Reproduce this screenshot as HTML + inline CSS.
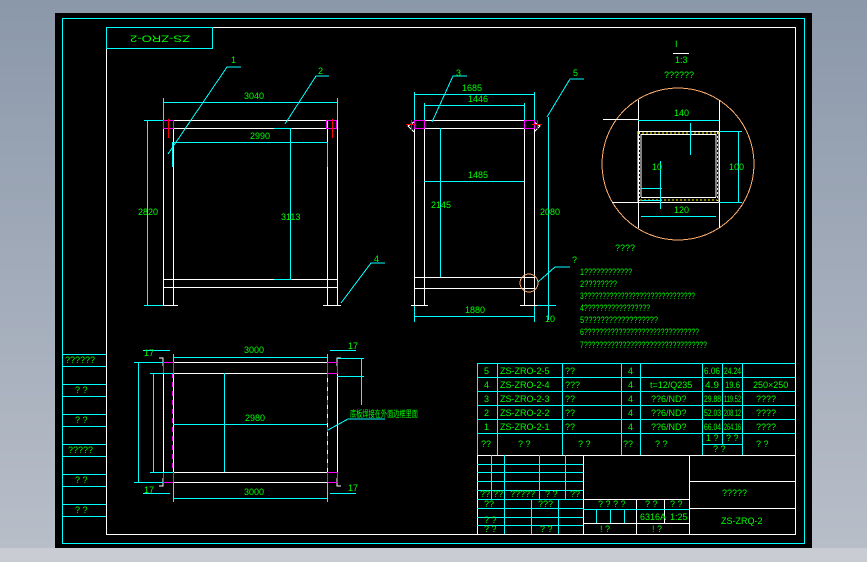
<!DOCTYPE html>
<html><head><meta charset="utf-8"><style>
html,body{margin:0;padding:0;width:867px;height:562px;overflow:hidden;background:#c9ccd3}
svg{display:block}
text{font-family:"Liberation Sans Narrow","Liberation Sans",sans-serif;fill:#00ff00;font-size:9px}
</style></head><body>
<svg width="867" height="562" viewBox="0 0 867 562" xmlns="http://www.w3.org/2000/svg">
<defs><linearGradient id="g" x1="0" y1="0" x2="0" y2="1"><stop offset="0" stop-color="#8b98aa"/><stop offset="1" stop-color="#b9bfc9"/></linearGradient></defs>
<rect x="0" y="0" width="867" height="562" fill="url(#g)"/>
<rect x="0" y="548" width="867" height="14" fill="#c9ccd3"/>
<rect x="55" y="13" width="757" height="535" fill="#000"/>
<g fill="none" stroke-width="1" shape-rendering="crispEdges">
<rect x="62.5" y="18.5" width="742" height="525" stroke="#00ffff"/>
<rect x="106.5" y="27.5" width="689" height="507" stroke="#fff"/>
<rect x="106.5" y="27.5" width="106" height="21" stroke="#00ffff"/>
<path stroke="#00ffff" d="M62 354.5H106M62 366.5H106M62 384.5H106M62 396.5H106M62 414.5H106M62 426.5H106M62 444.5H106M62 456.5H106M62 474.5H106M62 486.5H106M62 504.5H106M62 516.5H106"/>
<path stroke="#fff" d="M163.5 120V305M173.5 120V305M327.5 120V305M337.5 120V305M163 120.5H337M163 128.5H337M163 279.5H337M163 287.5H337M159 305.5H178M323 305.5H341"/>
<path stroke="#00ffff" d="M163 102.5H337M163.5 98V120M337.5 98V120M172 142.5H327M172.5 142V167M327.5 142V167M147.5 120V305M144 120.5H163M144 305.5H163M290.5 128V279M274 128.5H292M274 279.5H292"/>
<path stroke="#00ffff" d="M168 154L227 67H241M285 124L316 76H329M341 303L371 263H385"/>
<path stroke="#ff00ff" d="M163.5 120.5h10v8h-10zM326.5 120.5h10v8h-10z"/>
<path stroke="#ff0000" d="M168.5 119V138M332.5 119V138"/>
<path stroke="#fff" d="M414.5 120V305M424.5 120V305M524.5 120V305M534.5 120V305M414 120.5H534M414 128.5H534M414 277.5H534M414 288.5H534M411 305.5H428M520 305.5H537M414 122l-6 4 6 6M534 122l6 4-6 6"/>
<path stroke="#00ffff" d="M414 94.5H534M414.5 92V120M534.5 92V120M424 105.5H524M424.5 103V120M524.5 103V120M424 181.5H524M440.5 128V277M548.5 117V320M537 305.5H556M414 316.5H534M414.5 306V322M534.5 306V322"/>
<path stroke="#00ffff" d="M432 122L453 76H467M547 117L570 79H584M538 282L555 267H570"/>
<path stroke="#ff00ff" d="M414.5 120.5h10v8h-10zM524.5 120.5h10v8h-10z"/>
<path stroke="#ff0000" d="M406 124.5H416M411.5 120V130M532 124.5H542M537.5 120V130"/>
<circle cx="529" cy="283" r="9" stroke="#ffb070"/>
<circle cx="678" cy="164" r="76" stroke="#ffb070"/>
<path stroke="#fff" d="M673 53.5H689M638.5 100V228M719.5 100V228M603 119.5H638M612 202.5H638M638 131.5H719M641 134.5H716M638 202.5H719M641 197.5H716M641 134V197M716 134V197M638 131V202M719 131V202"/>
<path stroke="#ffff00" stroke-dasharray="2 2" d="M638 133H719M640 200H717M639.5 132V201M717.5 132V201"/>
<path stroke="#00ffff" d="M638 120.5H719M641 216.5H716M738.5 131V202M719 131.5H742M719 202.5H742M690.5 123V155M660.5 161V209M641 188.5H662M641 200.5H662"/>
<path stroke="#fff" d="M163.5 362V482M173.5 362V482M327.5 362V482M337.5 362V482M163 362.5H337M163 373.5H337M163 472.5H337M163 482.5H337M159 358h4v8M341 358h-4v8M159 486h4v-8M341 486h-4v-8"/>
<path stroke="#ff00ff" d="M163.5 362.5h10v11h-10zM327.5 362.5h10v11h-10zM163.5 472.5h10v10h-10zM327.5 472.5h10v10h-10z"/>
<path stroke="#ff00ff" stroke-dasharray="5 4" d="M172.5 373V472M327.5 373V472"/>
<path stroke="#00ffff" d="M173 357.5H327M173 498.5H327M173.5 354V362M327.5 354V362M173.5 482V502M327.5 482V502M173 424.5H327M224.5 373V472M138.5 362V482M134 362.5H163M134 482.5H163M153.5 373V472M150 373.5H173M150 472.5H173M361.5 358V405M337 358.5H364M337 376.5H364M143 350.5H170M143 493.5H170M330 350.5H356M330 493.5H356M328 430L348 419H385"/>
<path stroke="#00ffff" d="M477 363.5H795M477 377.5H795M477 391.5H795M477 405.5H795M477 419.5H795M477 433.5H795M702 444.5H742M477.5 363V455M497.5 363V455M562.5 363V455M621.5 363V455M640.5 363V455M702.5 363V455M722.5 363V444M742.5 363V455"/>
<path stroke="#fff" d="M477 455.5H795M583.5 455V534M689.5 455V534M689 481.5H795M689 508.5H795M583 499.5H689M583 523.5H689M477.5 455V534M636.5 499V534M664.5 499V523"/>
<path stroke="#00ffff" d="M477 464.5H583M477 472.5H583M477 481.5H583M477 490.5H583M491.5 455V499M504.5 455V499M539.5 455V499M565.5 455V499M477 499.5H583M477 508.5H583M477 517.5H583M477 525.5H583M504.5 499V534M531.5 499V534M558.5 499V534M583 509.5H689M596.5 509V523M610.5 509V523M624.5 509V523"/>
</g>
<text transform="translate(190,38) rotate(180)" font-size="14" textLength="60" lengthAdjust="spacingAndGlyphs" dominant-baseline="middle">ZS-ZRO-2</text>
<text x="231" y="63" font-size="12">1</text>
<text x="318" y="74" font-size="12">2</text>
<text x="374" y="262" font-size="12">4</text>
<text x="456" y="76" font-size="12">3</text>
<text x="573" y="76" font-size="12">5</text>
<text x="572" y="263" font-size="7">?</text>
<text x="244" y="99" font-size="6">3040</text>
<text x="250" y="139" font-size="6">2990</text>
<text x="138" y="215" font-size="6">2820</text>
<text x="281" y="220" font-size="6">3113</text>
<text x="462" y="91" font-size="6">1685</text>
<text x="468" y="102" font-size="6">1446</text>
<text x="468" y="178" font-size="6">1485</text>
<text x="540" y="215" font-size="6">2080</text>
<text x="431" y="208" font-size="6">2145</text>
<text x="465" y="313" font-size="6">1880</text>
<text x="545" y="322" font-size="6">10</text>
<text x="675" y="47" font-size="9">I</text>
<text x="675" y="63" font-size="9">1:3</text>
<text x="664" y="78" font-size="8">??????</text>
<text x="674" y="116" font-size="6">140</text>
<text x="674" y="213" font-size="6">120</text>
<text x="729" y="170" font-size="6">100</text>
<text x="652" y="170" font-size="6">10</text>
<text x="615" y="251" font-size="10">????</text>
<text x="580" y="275" font-size="8" textLength="52" lengthAdjust="spacingAndGlyphs">1????????????</text>
<text x="580" y="287" font-size="8" textLength="37" lengthAdjust="spacingAndGlyphs">2????????</text>
<text x="580" y="299" font-size="8" textLength="115" lengthAdjust="spacingAndGlyphs">3??????????????????????????????</text>
<text x="580" y="311" font-size="8" textLength="70" lengthAdjust="spacingAndGlyphs">4?????????????????</text>
<text x="580" y="323" font-size="8" textLength="78" lengthAdjust="spacingAndGlyphs">5??????????????????</text>
<text x="580" y="335" font-size="8" textLength="119" lengthAdjust="spacingAndGlyphs">6??????????????????????????????</text>
<text x="580" y="348" font-size="8" textLength="127" lengthAdjust="spacingAndGlyphs">7????????????????????????????????</text>
<text x="244" y="353" font-size="6">3000</text>
<text x="244" y="495" font-size="6">3000</text>
<text x="245" y="421" font-size="6">2980</text>
<text x="144" y="356" font-size="6">17</text>
<text x="144" y="493" font-size="6">17</text>
<text x="348" y="349" font-size="6">17</text>
<text x="348" y="491" font-size="6">17</text>
<text x="350" y="417" font-size="7" textLength="68" lengthAdjust="spacingAndGlyphs">底板焊接在外面边框里面</text>
<text x="65" y="363" font-size="8">??????</text>
<text x="75" y="393" font-size="8">? ?</text>
<text x="75" y="423" font-size="8">? ?</text>
<text x="68" y="453" font-size="8">?????</text>
<text x="75" y="483" font-size="8">? ?</text>
<text x="75" y="513" font-size="8">? ?</text>
<g font-size="9">
<text x="484" y="374">5</text><text x="500" y="374">ZS-ZRO-2-5</text><text x="565" y="374">??</text><text x="628" y="374">4</text>
<text x="484" y="388">4</text><text x="500" y="388">ZS-ZRO-2-4</text><text x="565" y="388">???</text><text x="628" y="388">4</text><text x="650" y="388" font-size="8">t=12/Q235</text><text x="753" y="388" font-size="8">250×250</text>
<text x="484" y="402">3</text><text x="500" y="402">ZS-ZRO-2-3</text><text x="565" y="402">??</text><text x="628" y="402">4</text><text x="651" y="402" font-size="8">??6/ND?</text><text x="756" y="402" font-size="8">????</text>
<text x="484" y="416">2</text><text x="500" y="416">ZS-ZRO-2-2</text><text x="565" y="416">??</text><text x="628" y="416">4</text><text x="651" y="416" font-size="8">??6/ND?</text><text x="756" y="416" font-size="8">????</text>
<text x="484" y="430">1</text><text x="500" y="430">ZS-ZRO-2-1</text><text x="565" y="430">??</text><text x="628" y="430">4</text><text x="651" y="430" font-size="8">??6/ND?</text><text x="756" y="430" font-size="8">????</text>
<text x="481" y="447" font-size="8">??</text><text x="518" y="447" font-size="8">?   ?</text><text x="578" y="447" font-size="8">?   ?</text><text x="623" y="447" font-size="8">??</text><text x="655" y="447" font-size="8">?   ?</text><text x="706" y="441" font-size="7">1 ?</text><text x="726" y="441" font-size="7">? ?</text><text x="713" y="452" font-size="7">?  ?</text><text x="756" y="447" font-size="8">?   ?</text>
</g>
<g font-size="7">
<text x="704" y="374" textLength="16" lengthAdjust="spacingAndGlyphs">6.06</text><text x="724" y="374" textLength="17" lengthAdjust="spacingAndGlyphs">24.24</text>
<text x="705" y="388" textLength="14" lengthAdjust="spacingAndGlyphs">4.9</text><text x="725" y="388" textLength="15" lengthAdjust="spacingAndGlyphs">19.6</text>
<text x="704" y="402" textLength="17" lengthAdjust="spacingAndGlyphs">29.88</text><text x="724" y="402" textLength="17" lengthAdjust="spacingAndGlyphs">119.52</text>
<text x="704" y="416" textLength="17" lengthAdjust="spacingAndGlyphs">52.03</text><text x="724" y="416" textLength="17" lengthAdjust="spacingAndGlyphs">208.12</text>
<text x="704" y="430" textLength="17" lengthAdjust="spacingAndGlyphs">66.04</text><text x="724" y="430" textLength="17" lengthAdjust="spacingAndGlyphs">264.16</text>
</g>
<g font-size="6">
<text x="480" y="497">??</text><text x="493" y="497">??</text><text x="510" y="497">?????</text><text x="545" y="497">? ?</text><text x="570" y="497">??</text>
<text x="484" y="507">??</text><text x="538" y="507">???</text><text x="484" y="523">? ?</text><text x="484" y="532">? ?</text><text x="540" y="532">? ?</text>
<text x="598" y="507">? ? ? ?</text><text x="645" y="507">? ?</text><text x="670" y="507">? ?</text>
<text x="640" y="520">6316A</text><text x="670" y="520">1:25</text>
<text x="600" y="532">!   ?</text><text x="652" y="532">!   ?</text>
</g>
<text x="722" y="496" font-size="9">?????</text>
<text x="721" y="524" font-size="11">ZS-ZRQ-2</text>
</svg>
</body></html>
